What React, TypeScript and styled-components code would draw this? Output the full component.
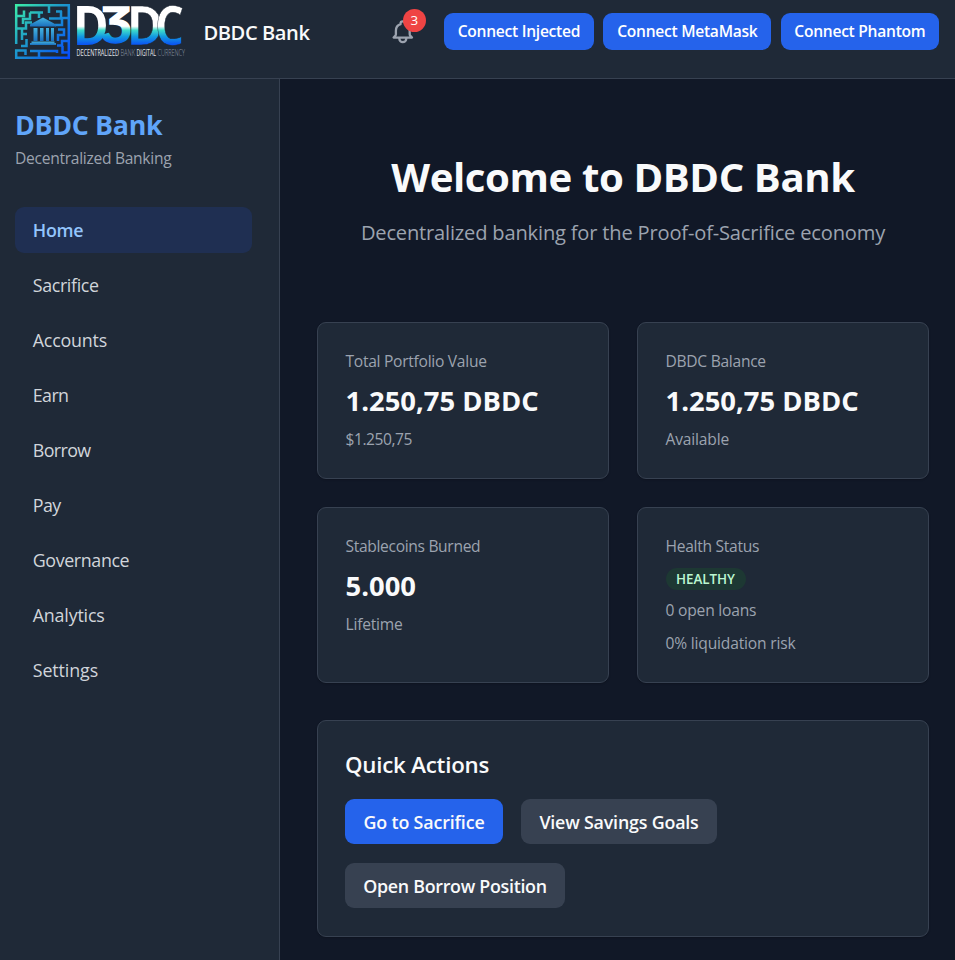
import React from 'react';
import styled, { createGlobalStyle } from 'styled-components';

const GlobalStyle = createGlobalStyle`
  *, *::before, *::after { box-sizing: border-box; }
  html, body { margin: 0; background: #111827; }
  body {
    font-family: 'Open Sans', 'Noto Sans', sans-serif;
    color: #f9fafb;
    overflow: hidden;
  }
  h1, h2, p { margin: 0; }
  button { font-family: inherit; border: 0; cursor: pointer; white-space: nowrap; }
`;

const Page = styled.div`
  display: flex;
  flex-direction: column;
  height: 960px;
  width: 955px;
`;

const Header = styled.header`
  display: flex;
  align-items: center;
  height: 79px;
  flex: none;
  padding: 0 16px 15px 15px;
  background: #1f2937;
  border-bottom: 1px solid #374151;
`;

const Logo = styled.svg`
  display: block;
  width: 171px;
  height: 56px;
  flex: none;
  margin-top: 1px;
  overflow: visible;
`;

const Brand = styled.span`
  margin: 3px 0 0 17.5px;
  font-size: 20.1px;
  font-weight: 600;
  letter-spacing: -0.43px;
  line-height: 28px;
`;

const HeaderActions = styled.div`
  display: flex;
  align-items: center;
  margin-left: auto;
`;

const BellButton = styled.div`
  position: relative;
  width: 28px;
  height: 28px;
  margin: 1px 27px 0 0;
  color: #9ca3af;
  svg { display: block; }
`;

const Count = styled.span`
  position: absolute;
  left: 14px;
  top: -9px;
  width: 23px;
  height: 23px;
  border-radius: 50%;
  background: #ef4444;
  color: #fff;
  font-size: 13.4px;
  line-height: 23px;
  text-align: center;
`;

const WalletButtons = styled.div`
  display: flex;
  gap: 9.4px;
`;

const WalletButton = styled.button<{ $width: number }>`
  width: ${(p) => p.$width}px;
  height: 37px;
  padding: 0 0 1px;
  border-radius: 9px;
  background: #2563eb;
  color: #fff;
  font-size: 15.6px;
  font-weight: 600;
  letter-spacing: -0.27px;
`;

const Body = styled.div`
  display: flex;
  flex: 1;
  min-height: 0;
`;

const Sidebar = styled.aside`
  width: 280px;
  flex: none;
  padding: 27px 27px 0 15px;
  background: #1f2937;
  border-right: 1px solid #374151;
`;

const SideTitle = styled.p`
  font-size: 26.8px;
  font-weight: 700;
  letter-spacing: -0.32px;
  line-height: 37px;
  color: #60a5fa;
`;

const SideSubtitle = styled.p`
  font-size: 15.6px;
  letter-spacing: -0.29px;
  line-height: 23px;
  margin-top: 4px;
  color: #9ca3af;
`;

const Nav = styled.nav`
  display: flex;
  flex-direction: column;
  gap: 9px;
  margin-top: 37px;
`;

const NavItem = styled.a<{ $active?: boolean; $track: number }>`
  height: 46px;
  line-height: 47px;
  padding-left: 17.75px;
  border-radius: 9px;
  font-size: 17.85px;
  letter-spacing: ${(p) => p.$track}px;
  font-weight: ${(p) => (p.$active ? 600 : 400)};
  color: ${(p) => (p.$active ? '#93c5fd' : '#d1d5db')};
  background: ${(p) => (p.$active ? '#1f2f52' : 'transparent')};
`;

const Main = styled.main`
  flex: 1;
  min-width: 0;
  padding: 73px 26px 0 37px;
`;

const Hero = styled.section`
  display: flex;
  flex-direction: column;
  align-items: center;
  height: 170px;
`;

const HeroTitle = styled.h1`
  font-size: 40.2px;
  font-weight: 700;
  line-height: 50px;
  letter-spacing: -0.42px;
  white-space: nowrap;
`;

const HeroText = styled.p`
  margin-top: 15px;
  font-size: 20.1px;
  line-height: 32px;
  letter-spacing: -0.18px;
  color: #9ca3af;
  white-space: nowrap;
`;

const CardGrid = styled.section`
  display: grid;
  grid-template-columns: 1fr 1fr;
  grid-template-rows: 157px 176px;
  gap: 28px;
`;

const Card = styled.article`
  padding: 26px 27.5px;
  background: #1f2937;
  border: 1px solid #374151;
  border-radius: 9px;
  box-shadow: 0 1px 2px rgba(0, 0, 0, 0.2);
`;

const CardLabel = styled.p<{ $track?: number }>`
  font-size: 15.6px;
  line-height: 24px;
  letter-spacing: ${(p) => p.$track ?? -0.28}px;
  color: #9ca3af;
`;

const CardValue = styled.p`
  margin-top: 9px;
  font-size: 27.4px;
  font-weight: 700;
  line-height: 37px;
  letter-spacing: 0.01px;
`;

const CardNote = styled(CardLabel)`
  margin-top: 8px;
`;

const SpacedNote = styled(CardNote)`
  margin-top: 9px;
`;

const Pill = styled.span`
  display: block;
  width: 80px;
  height: 22px;
  margin-top: 10px;
  border-radius: 12px;
  background: #1d3833;
  color: #bbf7d0;
  font-size: 13.4px;
  font-weight: 600;
  line-height: 23px;
  text-align: center;
  letter-spacing: -0.04px;
`;

const QuickPanel = styled(Card)`
  height: 217px;
  margin-top: 37px;
  padding: 27px;
`;

const PanelTitle = styled.h2`
  font-size: 22.3px;
  font-weight: 600;
  line-height: 34px;
  letter-spacing: -0.22px;
`;

const ActionRow = styled.div`
  display: flex;
  flex-wrap: wrap;
  gap: 19px 18px;
  margin-top: 17px;
`;

const ActionButton = styled.button<{ $primary?: boolean; $width: number; $track: number }>`
  width: ${(p) => p.$width}px;
  height: 45px;
  padding: 0;
  border-radius: 9px;
  background: ${(p) => (p.$primary ? '#2563eb' : '#374151')};
  color: #f9fafb;
  font-size: 17.85px;
  font-weight: 600;
  letter-spacing: ${(p) => p.$track}px;
`;

function BankLogo() {
  return (
    <Logo viewBox="0 0 171 56">
      <defs>
        <linearGradient id="maze" gradientUnits="userSpaceOnUse" x1="0" y1="0" x2="55" y2="55">
          <stop offset="0" stopColor="#3df0a6" />
          <stop offset="0.4" stopColor="#1f9fc8" />
          <stop offset="1" stopColor="#0448ff" />
        </linearGradient>
        <linearGradient id="bank" x1="0" y1="0" x2="0" y2="1">
          <stop offset="0" stopColor="#43b3e0" />
          <stop offset="1" stopColor="#1b6fbd" />
        </linearGradient>
        <linearGradient id="word" gradientUnits="userSpaceOnUse" x1="0" y1="2" x2="0" y2="41">
          <stop offset="0.52" stopColor="#ffffff" />
          <stop offset="0.62" stopColor="#3fdccb" />
          <stop offset="0.78" stopColor="#139be0" />
          <stop offset="1" stopColor="#0a50f5" />
        </linearGradient>
      </defs>
      <g fill="none" stroke="url(#maze)" strokeWidth="2.5">
        <path d="M1.2 40V1.2H53.8V53.8H1.2V46.5H10.5V51" />
        <path d="M1 12H9V6.5M15 8.5H28M15 8.5V15H8V20M24 9V14M34 1V9M34 14.5H46V7M41 7.5H47M54 14H47V21H40" />
        <path d="M1 24.5H11V18.5H17M7 24V36M7 30H12M11.5 35V42H6M15 47H24V54M24 47H42V49M47.5 42V48.5H53M53 37H47V41.5H42M43 37V31H49V25.5H43" />
      </g>
      <g fill="url(#bank)">
        <path d="M28 13.5 41 20.5V22.5H15V20.5Z" />
        <path d="M18.5 24H22.5V37H18.5ZM25 24H28.5V37H25ZM31 24H34V37H31ZM36 24H39V37H36Z" />
        <path d="M16.5 37.5H39.5V39H41V41H15V39H16.5Z" />
      </g>
      <g
        fill="url(#word)"
        fontFamily="Open Sans, sans-serif"
        fontWeight="700"
        fontSize="54.5"
      >
        <text x="57.8" y="41" textLength="36" lengthAdjust="spacingAndGlyphs">D</text>
        <text x="86.5" y="31" fontSize="40" stroke="url(#word)" strokeWidth="1.4" textLength="30" lengthAdjust="spacingAndGlyphs">Ʒ</text>
        <text x="111.5" y="41" stroke="#1f2937" strokeWidth="0.5" textLength="37" lengthAdjust="spacingAndGlyphs">D</text>
        <text x="140" y="41" stroke="#1f2937" strokeWidth="0.5" textLength="29" lengthAdjust="spacingAndGlyphs">C</text>
      </g>
      <g fontFamily="Open Sans, sans-serif" fontSize="8.4" fill="#e5e7eb">
        <text x="61.5" y="51.5" fontWeight="400" textLength="42.5" lengthAdjust="spacingAndGlyphs">DECENTRALIZED</text>
        <text x="105.5" y="51.5" fontWeight="300" fill="#8b95a3" textLength="14.5" lengthAdjust="spacingAndGlyphs">BANK</text>
        <text x="121.5" y="51.5" fontWeight="400" textLength="19.5" lengthAdjust="spacingAndGlyphs">DIGITAL</text>
        <text x="142.5" y="51.5" fontWeight="300" fill="#8b95a3" textLength="27.5" lengthAdjust="spacingAndGlyphs">CURRENCY</text>
      </g>
    </Logo>
  );
}

function BellIcon() {
  return (
    <svg width="27.6" height="27.6" viewBox="0 0 24 24" fill="none" stroke="currentColor" strokeWidth="2" strokeLinecap="round" strokeLinejoin="round">
      <path d="M15 17h5l-1.405-1.405A2.032 2.032 0 0118 14.158V11a6.002 6.002 0 00-4-5.659V5a2 2 0 10-4 0v.341C7.67 6.165 6 8.388 6 11v3.159c0 .538-.214 1.055-.595 1.436L4 17h5m6 0v1a3 3 0 11-6 0v-1m6 0H9" />
    </svg>
  );
}

const navItems = [
  { label: 'Home', track: -0.26, active: true },
  { label: 'Sacrifice', track: -0.36 },
  { label: 'Accounts', track: -0.19 },
  { label: 'Earn', track: -0.6 },
  { label: 'Borrow', track: -0.6 },
  { label: 'Pay', track: -0.6 },
  { label: 'Governance', track: -0.38 },
  { label: 'Analytics', track: -0.18 },
  { label: 'Settings', track: -0.1 },
];

const wallets = [
  { label: 'Connect Injected', width: 150 },
  { label: 'Connect MetaMask', width: 168 },
  { label: 'Connect Phantom', width: 158.3 },
];

export default function App() {
  return (
    <Page>
      <GlobalStyle />
      <Header>
        <BankLogo />
        <Brand>DBDC Bank</Brand>
        <HeaderActions>
          <BellButton>
            <BellIcon />
            <Count>3</Count>
          </BellButton>
          <WalletButtons>
            {wallets.map((w) => (
              <WalletButton key={w.label} $width={w.width}>{w.label}</WalletButton>
            ))}
          </WalletButtons>
        </HeaderActions>
      </Header>
      <Body>
        <Sidebar>
          <SideTitle>DBDC Bank</SideTitle>
          <SideSubtitle>Decentralized Banking</SideSubtitle>
          <Nav>
            {navItems.map((n) => (
              <NavItem key={n.label} $active={n.active} $track={n.track}>{n.label}</NavItem>
            ))}
          </Nav>
        </Sidebar>
        <Main>
          <Hero>
            <HeroTitle>Welcome to DBDC Bank</HeroTitle>
            <HeroText>Decentralized banking for the Proof-of-Sacrifice economy</HeroText>
          </Hero>
          <CardGrid>
            <Card>
              <CardLabel>Total Portfolio Value</CardLabel>
              <CardValue>1.250,75 DBDC</CardValue>
              <CardNote $track={-0.45}>$1.250,75</CardNote>
            </Card>
            <Card>
              <CardLabel>DBDC Balance</CardLabel>
              <CardValue>1.250,75 DBDC</CardValue>
              <CardNote $track={-0.17}>Available</CardNote>
            </Card>
            <Card>
              <CardLabel $track={-0.33}>Stablecoins Burned</CardLabel>
              <CardValue>5.000</CardValue>
              <CardNote $track={-0.22}>Lifetime</CardNote>
            </Card>
            <Card>
              <CardLabel>Health Status</CardLabel>
              <Pill>HEALTHY</Pill>
              <CardNote $track={-0.2}>0 open loans</CardNote>
              <SpacedNote $track={-0.18}>0% liquidation risk</SpacedNote>
            </Card>
          </CardGrid>
          <QuickPanel>
            <PanelTitle>Quick Actions</PanelTitle>
            <ActionRow>
              <ActionButton $primary $width={158} $track={-0.15}>Go to Sacrifice</ActionButton>
              <ActionButton $width={196} $track={-0.19}>View Savings Goals</ActionButton>
              <ActionButton $width={220} $track={-0.29}>Open Borrow Position</ActionButton>
            </ActionRow>
          </QuickPanel>
        </Main>
      </Body>
    </Page>
  );
}
